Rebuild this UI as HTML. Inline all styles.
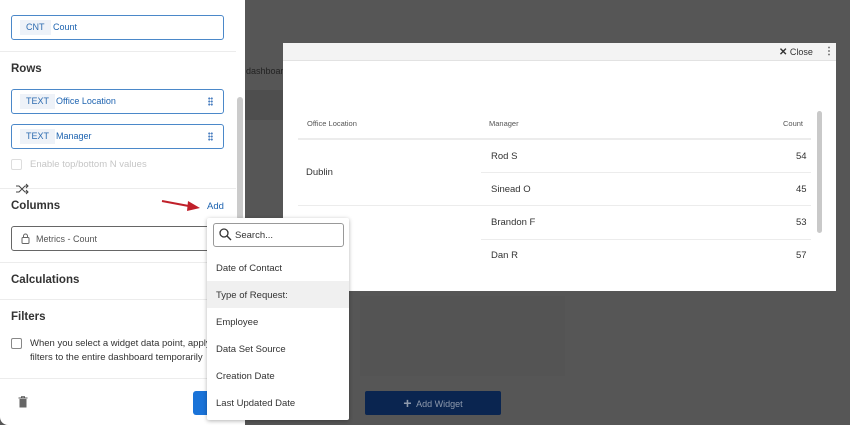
<!DOCTYPE html>
<html><head><style>
*{box-sizing:border-box;margin:0;padding:0}
body{width:850px;height:425px;overflow:hidden;background:#565656;font-family:"Liberation Sans",sans-serif;position:relative;color:#333}
.abs{position:absolute}
.panel{left:0;top:0;width:245px;height:425px;background:#fff;border-bottom-left-radius:8px}
.pill{position:absolute;left:11px;width:213px;height:25px;border:1px solid #4b88c9;border-radius:3px;font-size:9px;color:#1d63b0}
.tag{position:absolute;left:8px;top:4px;height:15px;padding:0 6px;background:#eef2f8;line-height:15px;color:#2e6cb0}
.lbl{position:absolute;top:0;line-height:23px}
.h{position:absolute;left:11px;font-size:11.5px;font-weight:bold;color:#333}
.hr{position:absolute;left:0;width:236px;height:1px;background:#ececec}
.dots{position:absolute;right:10px;top:7px;width:5px;height:9px;background:radial-gradient(circle,#4b7fc0 0.9px,transparent 1.2px) 0 0/2.5px 3px}
.modal{left:283px;top:43px;width:553px;height:248px;background:#fff}
.dd{left:207px;top:218px;width:142px;height:202px;background:#fff;box-shadow:0 1px 4px rgba(0,0,0,.3);border-radius:2px}
.it{position:absolute;left:9px;font-size:9.5px;color:#333}
.cell{position:absolute;font-size:9.5px;color:#333}
</style></head><body>
<div class="abs" style="left:245px;top:90px;width:40px;height:30px;background:#4e4e4e"></div>
<div class="abs" style="left:246px;top:66px;font-size:9px;color:#222">dashboar</div>
<div class="abs" style="left:360px;top:296px;width:205px;height:80px;background:#545454"></div>
<div class="abs" style="left:365px;top:391px;width:136px;height:24px;background:#0a2550;border-radius:2px;color:#8e9aad;font-size:9px;line-height:24px;text-align:center"><span style="font-size:14px;font-weight:bold;vertical-align:-1px">+</span>&nbsp; Add Widget</div>

<div class="abs panel">
  <div class="pill" style="top:15px"><span class="tag">CNT</span><span class="lbl" style="left:41px">Count</span></div>
  <div class="hr" style="top:51px"></div>
  <div class="h" style="top:63px">Rows</div>
  <div class="pill" style="top:89px"><span class="tag">TEXT</span><span class="lbl" style="left:44px">Office Location</span><span class="dots"></span></div>
  <div class="pill" style="top:124px"><span class="tag">TEXT</span><span class="lbl" style="left:44px">Manager</span><span class="dots"></span></div>
  <div class="abs" style="left:11px;top:159px;width:11px;height:11px;border:1px solid #ddd;border-radius:2px"></div>
  <div class="abs" style="left:30px;top:159px;font-size:9.5px;color:#c6c6c6">Enable top/bottom N values</div>
  <div class="hr" style="top:188px"></div>
  <svg class="abs" style="left:15px;top:183px" width="14" height="12" viewBox="0 0 14 12"><path d="M1 3h3l6 6h3M1 9h3l6-6h3M11 1l2 2-2 2M11 7l2 2-2 2" fill="none" stroke="#444" stroke-width="1"/></svg>
  <div class="h" style="top:200px">Columns</div>
  <svg class="abs" style="left:160px;top:197px" width="42" height="16" viewBox="0 0 42 16"><path d="M2 4 L34 10" stroke="#c0202a" stroke-width="2"/><path d="M28 4 L40 11 L27 14 Z" fill="#c0202a"/></svg>
  <div class="abs" style="left:207px;top:201px;font-size:9.5px;color:#1d63b0">Add</div>
  <div class="abs" style="left:11px;top:226px;width:205px;height:25px;border:1px solid #666;border-radius:3px"></div>
  <svg class="abs" style="left:21px;top:233px" width="9" height="11" viewBox="0 0 9 11"><rect x="1" y="4.5" width="7" height="6" rx="1" fill="none" stroke="#666"/><path d="M2.5 4.5V3a2 2 0 014 0v1.5" fill="none" stroke="#666"/></svg>
  <div class="abs" style="left:36px;top:234px;font-size:9px;color:#555">Metrics - Count</div>
  <div class="hr" style="top:262px"></div>
  <div class="h" style="top:274px">Calculations</div>
  <div class="hr" style="top:299px"></div>
  <div class="h" style="top:311px">Filters</div>
  <div class="abs" style="left:11px;top:338px;width:11px;height:11px;border:1px solid #888;border-radius:2px"></div>
  <div class="abs" style="left:30px;top:337px;font-size:9.5px;color:#333;line-height:13.5px;width:180px;white-space:nowrap">When you select a widget data point, apply<br>filters to the entire dashboard temporarily</div>
  <div class="hr" style="top:378px"></div>
  <svg class="abs" style="left:18px;top:396px" width="10" height="12" viewBox="0 0 10 12"><path d="M0.5 2h9M3.5 2V0.8h3V2" stroke="#555" fill="none"/><rect x="1.5" y="3" width="7" height="8.5" fill="#666"/></svg>
  <div class="abs" style="left:193px;top:391px;width:20px;height:24px;background:#1a73d8;border-radius:3px"></div>
  <div class="abs" style="left:237px;top:97px;width:6px;height:123px;background:#cbcbcb;border-radius:3px"></div>
</div>

<div class="abs modal">
  <div class="abs" style="left:0;top:0;width:553px;height:18px;background:#f3f3f3;border-bottom:1px solid #e2e2e2"></div>
  <div class="abs" style="left:496px;top:4px;font-size:9px;color:#333"><b style="font-size:10px">✕</b> Close</div>
  <div class="abs" style="left:541px;top:3px;font-size:10px;font-weight:bold;color:#555">⋮</div>
  <div class="cell" style="left:24px;top:76px;font-size:7.5px;color:#555">Office Location</div>
  <div class="cell" style="left:206px;top:76px;font-size:7.5px;color:#555">Manager</div>
  <div class="cell" style="left:500px;top:76px;font-size:7.5px;color:#555">Count</div>
  <div class="abs" style="left:15px;top:95px;width:513px;height:2px;background:#ececec"></div>
  <div class="cell" style="left:23px;top:124px">Dublin</div>
  <div class="cell" style="left:208px;top:108px">Rod S</div><div class="cell" style="left:513px;top:108px">54</div>
  <div class="abs" style="left:198px;top:129px;width:330px;height:1px;background:#ececec"></div>
  <div class="cell" style="left:208px;top:141px">Sinead O</div><div class="cell" style="left:513px;top:141px">45</div>
  <div class="abs" style="left:15px;top:162px;width:513px;height:1px;background:#ececec"></div>
  <div class="cell" style="left:208px;top:174px">Brandon F</div><div class="cell" style="left:513px;top:174px">53</div>
  <div class="abs" style="left:198px;top:196px;width:330px;height:1px;background:#ececec"></div>
  <div class="cell" style="left:208px;top:207px">Dan R</div><div class="cell" style="left:513px;top:207px">57</div>
  <div class="abs" style="left:534px;top:68px;width:5px;height:122px;background:#c9c9c9;border-radius:3px"></div>
</div>

<div class="abs dd">
  <div class="abs" style="left:6px;top:5px;width:131px;height:24px;border:1px solid #999;border-radius:3px"></div>
  <svg class="abs" style="left:12px;top:10px" width="13" height="13" viewBox="0 0 13 13"><circle cx="5" cy="5" r="4" fill="none" stroke="#333" stroke-width="1.3"/><path d="M8 8l4 4" stroke="#333" stroke-width="1.4"/></svg>
  <div class="it" style="left:28px;top:12px">Search...</div>
  <div class="it" style="top:45px">Date of Contact</div>
  <div class="abs" style="left:0;top:63px;width:142px;height:27px;background:#f0f0f0"></div>
  <div class="it" style="top:72px">Type of Request:</div>
  <div class="it" style="top:99px">Employee</div>
  <div class="it" style="top:126px">Data Set Source</div>
  <div class="it" style="top:153px">Creation Date</div>
  <div class="it" style="top:180px">Last Updated Date</div>
</div>
</body></html>
